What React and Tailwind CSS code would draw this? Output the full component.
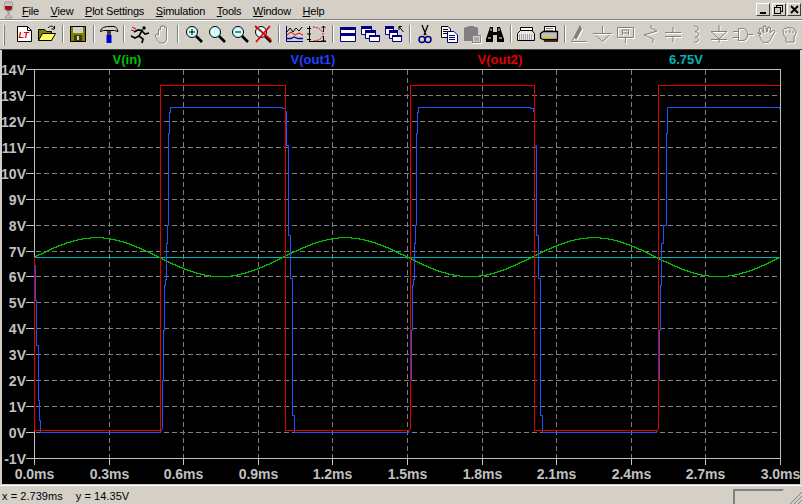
import React from "react";

const menus = ["File", "View", "Plot Settings", "Simulation", "Tools", "Window", "Help"];
const voltLabels = [14, 13, 12, 11, 10, 9, 8, 7, 6, 5, 4, 3, 2, 1, 0, -1];
const timeLabels = ["0.0", "0.3", "0.6", "0.9", "1.2", "1.5", "1.8", "2.1", "2.4", "2.7", "3.0"];

const vY = (n) => Math.floor(69.5 + n * 25.93) + 0.5;
const tX = (n) => Math.floor(34.5 + n * 74.6) + 0.5;

const Ic = ({ children }) => (
  <svg width="22" height="22" viewBox="0 0 22 22" fill="none">
    {children}
  </svg>
);

// greyed out toolbar icon, drawn twice for the etched look
const Off = ({ children, fill = "none" }) => (
  <Ic>
    <g stroke="#ffffff" fill={fill === "none" ? "none" : "#ffffff"} transform="translate(1 1)">{children}</g>
    <g stroke="#808080" fill={fill === "none" ? "none" : "#808080"}>{children}</g>
  </Ic>
);

const Magnifier = ({ children }) => (
  <Ic>
    <circle cx="9" cy="9" r="5.5" fill="#d0ffff" stroke="#000" />
    <path d="M13 13L19 19" stroke="#000" strokeWidth="2.6" />
    {children}
  </Ic>
);

const icons = {
  doc: (
    <Ic>
      <path d="M4.5 3.5H14.5L18.5 7.5V18.5H4.5Z" fill="#fff" stroke="#000" />
      <path d="M14.5 3.5V7.5H18.5" stroke="#000" />
      <text x="5.5" y="15" fontSize="9" fontWeight="700" fontStyle="italic" fill="#e00000" fontFamily="Liberation Sans, sans-serif">LT</text>
    </Ic>
  ),
  open: (
    <Ic>
      <path d="M2.5 6.5H8.5L10.5 8.5H15.5V17.5H2.5Z" fill="#808000" stroke="#000" />
      <path d="M2.5 17.5L6.5 10.5H19.5L15.5 17.5Z" fill="#ffff60" stroke="#000" />
      <path d="M12 5C14 2.5 17 2.5 18 5M18.5 3V6H15.5" stroke="#000" />
    </Ic>
  ),
  save: (
    <Ic>
      <path d="M3.5 3.5H18.5V18.5H3.5Z" fill="#808000" stroke="#000" />
      <rect x="6" y="4" width="10" height="6" fill="#d4d0c8" />
      <rect x="7" y="12" width="8" height="6" fill="#404000" />
      <rect x="10" y="13" width="2" height="4" fill="#d4d0c8" />
    </Ic>
  ),
  hammer: (
    <Ic>
      <path d="M2.5 8.5C3 4.5 7 3.5 11 3.5H16C18.5 4 19.5 6 20 8.5L16.5 7.5H5.5Z" fill="#d4d0c8" stroke="#000" />
      <rect x="9" y="8" width="4" height="5" fill="#404040" />
      <rect x="8.5" y="12" width="5" height="8" fill="#0000d0" />
    </Ic>
  ),
  run: (
    <Ic>
      <circle cx="15" cy="5" r="1.7" fill="#000" />
      <path d="M5 9L9 7L13 7.5L10 13L14 16L13 20M10 13L6 15L2 13M13 8L16 11L20 10" stroke="#000" strokeWidth="1.7" />
      <path d="M3 4L7 6M2 7L5 8" stroke="#c00000" />
    </Ic>
  ),
  hand: (
    <Off>
      <path d="M6.5 12V7C6.5 5.5 8.5 5.5 8.5 7V4C8.5 2.5 10.5 2.5 10.5 4V3.5C10.5 2 12.5 2 12.5 3.5V5C12.5 3.5 14.5 3.5 14.5 5V13C14.5 16 14 19 12 20H8C6 18 4 15 3.5 13C3 11 5 10.5 6.5 12Z" />
    </Off>
  ),
  zoomIn: (
    <Magnifier>
      <path d="M6 9H12M9 6V12" stroke="#000" />
    </Magnifier>
  ),
  zoomRect: <Magnifier />,
  zoomOut: (
    <Magnifier>
      <path d="M6 9H12" stroke="#000" />
    </Magnifier>
  ),
  zoomNo: (
    <Magnifier>
      <path d="M3 3L19 17M18 3L4 19" stroke="#e00000" strokeWidth="1.8" />
    </Magnifier>
  ),
  waves: (
    <Ic>
      <path d="M3.5 3V18.5H20" stroke="#000060" />
      <path d="M4 9L7 5L10 9L13 5L16 8L19 4" stroke="#000" />
      <path d="M4 12L8 9L12 12L16 10L20 12" stroke="#e00000" />
      <path d="M4 15.5H8L11 14L15 15.5H20" stroke="#0000c0" strokeWidth="1.3" />
    </Ic>
  ),
  plot: (
    <Ic>
      <path d="M3.5 3V19M1 5.5H5M1 11H5M1 16.5H5M3 18.5H20" stroke="#000" />
      <path d="M7 4C14 4 17 9 17 11C17 14 14 18 7 18" stroke="#e00000" strokeDasharray="2 1" />
      <path d="M17.5 3V9M15.5 5L17.5 3L19.5 5M17.5 13V19M15.5 17L17.5 19L19.5 17" stroke="#000" />
    </Ic>
  ),
  tile: (
    <Ic>
      <path d="M3.5 4.5H18.5V18.5H3.5Z" fill="#fff" stroke="#000080" />
      <rect x="3" y="4" width="16" height="3" fill="#000080" />
      <rect x="3" y="10" width="16" height="3" fill="#000080" />
    </Ic>
  ),
  cascade: (
    <Ic>
      <path d="M1.5 3.5H11.5V11.5H1.5Z" fill="#fff" stroke="#000080" />
      <rect x="1" y="3" width="11" height="3" fill="#000080" />
      <path d="M5.5 7.5H15.5V15.5H5.5Z" fill="#fff" stroke="#000080" />
      <rect x="5" y="7" width="11" height="3" fill="#000080" />
      <path d="M9.5 12.5H19.5V18.5H9.5Z" fill="#fff" stroke="#000080" />
      <rect x="9" y="12" width="11" height="2" fill="#000080" />
    </Ic>
  ),
  cascadeArrow: (
    <Ic>
      <path d="M1.5 3.5H9.5V11.5H1.5Z" fill="#fff" stroke="#000080" />
      <rect x="1" y="3" width="9" height="3" fill="#000080" />
      <path d="M5.5 7.5H13.5V15.5H5.5Z" fill="#fff" stroke="#000080" />
      <rect x="5" y="7" width="9" height="3" fill="#000080" />
      <path d="M8.5 12.5H17.5V18.5H8.5Z" fill="#fff" stroke="#000080" />
      <rect x="8" y="12" width="10" height="2" fill="#000080" />
      <path d="M19.5 9L15 3.5M15 7V3.5H18" stroke="#000" />
    </Ic>
  ),
  cut: (
    <Ic>
      <path d="M8 2L12 12M14 2L10 12" stroke="#000" strokeWidth="1.3" />
      <circle cx="8" cy="16.5" r="3" stroke="#000080" strokeWidth="1.5" />
      <circle cx="14" cy="16.5" r="3" stroke="#000080" strokeWidth="1.5" />
    </Ic>
  ),
  copy: (
    <Ic>
      <path d="M3.5 3.5H10L12.5 6V14.5H3.5Z" fill="#fff" stroke="#000" />
      <path d="M5 6.5H10M5 8.5H10M5 10.5H10" stroke="#000" />
      <path d="M9.5 8.5H16L19.5 12V19.5H9.5Z" fill="#fff" stroke="#000080" />
      <path d="M11 12.5H17M11 14.5H17M11 16.5H17" stroke="#000080" />
    </Ic>
  ),
  paste: (
    <Ic>
      <path d="M3 6C3 4 4 4 7 4V3H13V4C16 4 17 4 17 6V18H3Z" fill="#808080" />
      <path d="M11.5 12.5H19.5V19.5H11.5Z" fill="#d4d0c8" stroke="#808080" />
      <path d="M13 15H18M13 17H18" stroke="#808080" />
      <path d="M12 20.5H20.5V13" stroke="#fff" />
    </Ic>
  ),
  binoculars: (
    <Ic>
      <path d="M6 4H9V9H13V4H16L20 16V19H13V12H9V19H2V16Z" fill="#000" />
      <path d="M4 15H7M15 15H18M7 5.5V8M15 5.5V8" stroke="#fff" />
    </Ic>
  ),
  preview: (
    <Ic>
      <path d="M5.5 4.5H17.5V9.5H5.5Z" fill="#fff" stroke="#000" />
      <path d="M2.5 10.5L5.5 7.5H17L19.5 10.5V17.5H2.5Z" fill="#e8e8e8" stroke="#000" />
      <path d="M4 12H18M4 14H18M4 16H18" stroke="#606060" strokeDasharray="1 1" />
    </Ic>
  ),
  print: (
    <Ic>
      <path d="M6.5 3.5H17.5V9.5H6.5Z" fill="#fff" stroke="#000" />
      <path d="M8 5.5H15M8 7.5H15" stroke="#808080" />
      <path d="M2.5 10.5L5.5 8.5H19.5V16.5H5.5L2.5 15Z" fill="#c0c0c0" stroke="#000" strokeWidth="1.3" />
      <path d="M4 15H16" stroke="#e0c000" strokeWidth="1.5" />
      <path d="M6 18H20" stroke="#000" strokeWidth="1.5" />
    </Ic>
  ),
  wire: (
    <Off>
      <path d="M2.5 18.5H17.5M3.5 17.5L9.5 6.5" />
      <path d="M6 14L11 4L12 6L7 15Z" fill="#808080" strokeWidth="2" />
    </Off>
  ),
  ground: (
    <Off>
      <path d="M10.5 3V10M1 10.5H20M3.5 12L10.5 18.5L17.5 12" />
    </Off>
  ),
  label: (
    <Off>
      <path d="M2.5 4.5H18.5V14.5H2.5ZM10.5 15V20M7.5 12V7H13.5V12M8 10H13" />
    </Off>
  ),
  resistor: (
    <Off>
      <path d="M12 2V5L18 8L5 12L14 16V20" />
    </Off>
  ),
  cap: (
    <Off>
      <path d="M3 9.5H19M3 13.5H19M11 4V9M11 14V19" />
    </Off>
  ),
  inductor: (
    <Off>
      <path d="M9 3C14 3 15 7 10 8.5C15 10 15 13 10 14.5C15 15 14 20 9 19" />
    </Off>
  ),
  diode: (
    <Off>
      <path d="M11 2V8M3 8.5H19L11 16ZM3 16.5H19M11 16V20" />
    </Off>
  ),
  part: (
    <Off>
      <path d="M1 8.5H6M1 14.5H6M6.5 5.5H11C17 5.5 17 17.5 11 17.5H6.5ZM16 11.5H21" />
    </Off>
  ),
  hand2: (
    <Off>
      <path d="M3 9L6 12L4 6L6 5L9 10L8 3.5L10.5 3L12 9L13 4L15.5 4.5L15 10L18 7L20 8.5L16 15C15 19 13 19.5 10 19.5C7 19.5 6 16 3 9Z" />
    </Off>
  ),
  fist: (
    <Off>
      <path d="M5 8C5 5 8 5 8 6C9 4 12 4 12 5.5C13 4 16 4.5 16 6.5C18 6 18.5 8 18 10L16 14V19H8V15C6 13 5 11 5 8ZM8 8V10M12 7V10M15 8V10" />
    </Off>
  ),
};

const toolbar = [
  "doc", "open", "|", "save", "|", "hammer", "|", "run", "hand", "|",
  "zoomIn", "zoomRect", "zoomOut", "zoomNo", "|", "waves", "plot", "|",
  "tile", "cascade", "cascadeArrow", "|", "cut", "copy", "paste", "binoculars", "|",
  "preview", "print", "|", "wire", "ground", "label", "resistor", "cap", "inductor",
  "diode", "part", "hand2", "fist",
];

const WinButton = ({ children }) => (
  <div className="w-[14px] h-[13px] bg-[#d4d0c8] border border-t-white border-l-white border-r-[#404040] border-b-[#404040] flex items-center justify-center">
    {children}
  </div>
);

const sinePoints = () => {
  const pts = [];
  for (let x = 35; x <= 780; x++) {
    const t = ((x - 34.5) / 746) * 3;
    const y = Math.floor(257.2 - 19.45 * Math.sin(2 * Math.PI * t)) + 0.5;
    pts.push(`${x},${y}`);
  }
  return pts.join(" ");
};

const redPath =
  "M34.5 257V430.5H160.5V85.5H285.5V430.5H409.5L410.5 428V85.5H534.5V430.5H657.5L658.5 428V85.5H780";

// one pulse of the slower output, rising then falling
const bluePulse = (r, f) =>
  `H${r + 160.5}L${r + 162.5} 428V380H${r + 163.5}V330H${r + 164.5}V285H${r + 165.5}V279H${r + 166.5}V243H${r + 167.5}V225H${r + 168.5}V133H${r + 169.5}V112H${r + 170.5}V107.5` +
  `H${f + 282.5}V108.5H${f + 285.5}V111H${f + 286.5}V145H${f + 288.5}V235H${f + 290.5}V278H${f + 292.5}V415H${f + 294.5}V432.5`;

const bluePath =
  "M35.5 265V300H36.5V345H38.5V400H39.5V420H40.5V432.5" +
  bluePulse(0, 0) +
  bluePulse(248, 248) +
  "H656.5L658.5 428V380H659.5V330H660.5V285H661.5V243H663.5V225H666.5V133H667.5V107.5H779.5V108.5";

const Chart = () => (
  <svg className="block w-[798px] h-[434px]" viewBox="2 50 798 434" shapeRendering="crispEdges">
    <g stroke="#808080" strokeDasharray="5 3">
      {voltLabels.slice(1, -1).map((v, i) => (
        <path key={v} d={`M36 ${vY(i + 1)}H780`} />
      ))}
      {timeLabels.slice(1, -1).map((t, i) => (
        <path key={t} d={`M${tX(i + 1)} 70V458`} />
      ))}
    </g>

    <path d="M34.5 69.5H780.5V458.5H34.5Z" fill="none" stroke="#c0c0c0" />
    <g stroke="#c0c0c0">
      {voltLabels.map((v, i) => (
        <path key={v} d={`M26 ${vY(i)}H34`} />
      ))}
      {timeLabels.map((t, i) => (
        <path key={t} d={`M${tX(i)} 459V465`} />
      ))}
    </g>

    <g fill="#c0c0c0" fontFamily="Liberation Sans, sans-serif" fontSize="14" fontWeight="700" shapeRendering="auto">
      {voltLabels.map((v, i) => (
        <text key={v} x="26" y={vY(i) + 5} textAnchor="end">{v}V</text>
      ))}
      {timeLabels.map((t, i) => (
        <text key={t} x={tX(i)} y="479" textAnchor="middle">{t}ms</text>
      ))}
    </g>

    <g fontFamily="Liberation Sans, sans-serif" fontSize="13" fontWeight="700" textAnchor="middle" shapeRendering="auto">
      <text x="127" y="64" fill="#00c000">V(in)</text>
      <text x="313" y="64" fill="#2040ff">V(out1)</text>
      <text x="500" y="64" fill="#e00000">V(out2)</text>
      <text x="686" y="64" fill="#00b4b4">6.75V</text>
    </g>

    <path d="M35 257.5H780" stroke="#00b4b4" />
    <polyline points={sinePoints()} fill="none" stroke="#00c000" />
    <path d={bluePath} fill="none" stroke="#2050ff" />
    <path d={redPath} fill="none" stroke="#e00000" />
  </svg>
);

export default function App() {
  return (
    <div className="w-[802px] h-[504px] bg-[#d4d0c8] flex flex-col overflow-hidden font-['Liberation_Sans',sans-serif] text-black">
      {/* menu bar */}
      <div className="h-[19px] flex items-center shrink-0 relative">
        <svg className="ml-[2px] mt-[1px]" width="13" height="18" viewBox="0 0 13 18">
          <path d="M3 1H10L11 6C11 9 9 10 7 10.5V14L10 16V17H3V16L6 14V10.5C4 10 2 9 2 6Z" fill="#c8c4bc" stroke="#808080" strokeWidth="0.6" />
          <path d="M3 5H10L10 7C10 9 8 9.5 6.5 9.5C5 9.5 3 9 3 7Z" fill="#a01020" />
        </svg>
        <div className="ml-[7px] mt-[3px] flex gap-[11.6px] text-[11px] tracking-[-0.2px] leading-none">
          {menus.map((m) => (
            <span key={m}>
              <u>{m[0]}</u>
              {m.slice(1)}
            </span>
          ))}
        </div>
        <div className="ml-auto mr-[1px] flex gap-[1.5px]">
          <WinButton>
            <span className="w-[6px] h-[2px] bg-black mt-[6px]" />
          </WinButton>
          <WinButton>
            <svg width="9" height="9" viewBox="0 0 9 9" fill="none" stroke="#000" shapeRendering="crispEdges">
              <path d="M2.5 2.5V0.5H8.5V6.5H6.5M0.5 2.5H6.5V8.5H0.5Z" />
            </svg>
          </WinButton>
          <WinButton>
            <svg width="9" height="9" viewBox="0 0 9 9" stroke="#000" strokeWidth="1.8">
              <path d="M1 1L8 8M8 1L1 8" />
            </svg>
          </WinButton>
        </div>
      </div>

      <div className="h-[2px] shrink-0 bg-white border-t border-[#808080]" />

      {/* toolbar */}
      <div className="h-[28px] shrink-0 flex items-center pl-[12.5px] pb-[2px]">
        <div className="absolute left-[3px] top-[25px] w-[2px] h-[21px] bg-[#f0eee8] border-r border-[#808080]" />
        {toolbar.map((name, i) =>
          name === "|" ? (
            <div key={i} className="w-[7.5px] h-[18px] flex justify-center shrink-0">
              <div className="w-[2px] h-full bg-white border-l border-[#808080]" />
            </div>
          ) : (
            <div key={i} className="w-[23.25px] flex justify-center shrink-0">
              {icons[name]}
            </div>
          )
        )}
      </div>

      {/* plot pane */}
      <div className="flex-1 px-[2px] bg-[#d4d0c8] border-t border-[#404040] min-h-0">
        <div className="bg-black w-[798px] h-[434px]">
          <Chart />
        </div>
      </div>

      {/* status bar */}
      <div className="h-[19px] shrink-0 border-t border-white flex items-center pt-[3px] text-[11px] tracking-[0.05px] relative">
        <span className="ml-[2px]">x = 2.739ms</span>
        <span className="ml-[13px]">y = 14.35V</span>
        <div className="absolute left-[733px] top-[3px] w-[51px] h-[16px] border-2 border-b-0 border-[#808080] border-r-[#d4d0c8]" />
        <svg className="absolute right-0 bottom-0" width="12" height="12" viewBox="0 0 12 12" stroke="#808080">
          <path d="M0 12L12 0M4 12L12 4M8 12L12 8" />
        </svg>
      </div>
    </div>
  );
}
